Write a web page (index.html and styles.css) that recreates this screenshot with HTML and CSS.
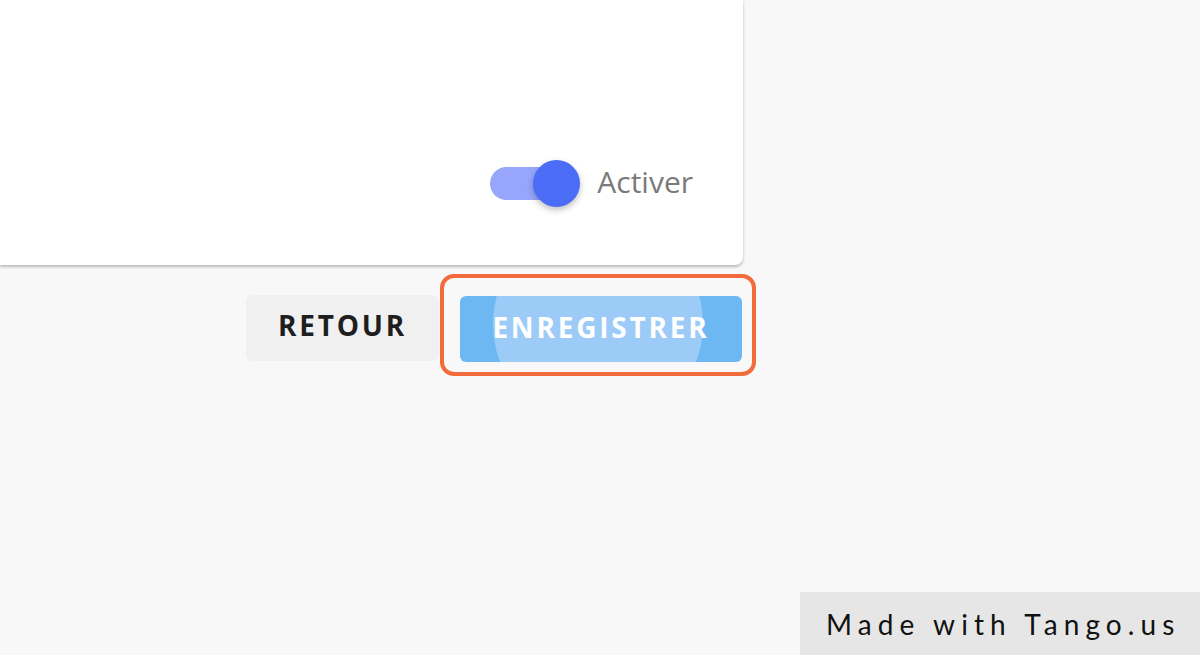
FILE: index.html
```html
<!DOCTYPE html>
<html lang="fr">
  <head>
    <meta charset="UTF-8" />
    <title>Paramètres</title>
    <link rel="stylesheet" href="styles.css">
  </head>
  <body>
    <div class="card">
      <label class="switch">
        <span class="track"><span class="knob"></span></span>
        <span class="switch-label">Activer</span>
      </label>
    </div>

    <div class="actions">
      <button class="btn btn-back">RETOUR</button>
      <div class="highlight">
        <button class="btn btn-save">
          <span class="ripple"></span>
          <span class="btn-text">ENREGISTRER</span>
        </button>
      </div>
    </div>

    <div class="tango">Made with Tango.us</div>
  </body>
</html>
```

FILE: styles.css
```css
body {
  margin: 0;
  background-color: #f8f8f8;
  font-family: "Open Sans", "Liberation Sans", sans-serif;
  height: 655px;
  overflow: hidden;
  position: relative;
}

.card {
  width: 743px;
  height: 265px;
  background: white;
  border-radius: 0 0 8px 0;
  box-shadow: 0 2px 3px rgba(0, 0, 0, 0.25);
  display: flex;
  justify-content: flex-end;
  align-items: flex-end;
  box-sizing: border-box;
  padding: 0 50px 63px 0;
}

.switch {
  display: flex;
  align-items: center;
  gap: 16px;
}

.track {
  position: relative;
  width: 67px;
  height: 33px;
  border-radius: 17px;
  background-color: #97a6fb;
  margin-right: 8px;
}

.knob {
  position: absolute;
  right: -23px;
  top: -7px;
  width: 47px;
  height: 47px;
  border-radius: 50%;
  background-color: #4a6cf7;
  box-shadow: 0 3px 6px rgba(0, 0, 0, 0.25);
}

.switch-label {
  font-size: 30px;
  color: #7a7a7a;
  margin-left: 16px;
  margin-top: -4px;
}

.actions {
  width: 743px;
  display: flex;
  justify-content: flex-end;
  align-items: center;
  gap: 1px;
  margin-top: 9px;
}

.btn {
  border: none;
  height: 66px;
  border-radius: 6px;
  font-family: "Open Sans", "Liberation Sans", sans-serif;
  font-weight: 700;
  font-size: 28px;
  letter-spacing: 2.8px;
  cursor: pointer;
}

.btn-back {
  width: 193px;
  margin-top: 5px;
  padding-bottom: 6px;
  background-color: #f0f0f0;
  color: #1e1e1e;
}

.highlight {
  padding: 18px 10px 10px 16px;
  margin-right: -13px;
  border: 4px solid #f26b3a;
  border-radius: 14px;
  box-sizing: border-box;
}

.btn-save {
  position: relative;
  overflow: hidden;
  width: 282px;
  background-color: #6db8f3;
  color: white;
  display: block;
  line-height: 54px;
  padding-bottom: 6px;
}

.ripple {
  position: absolute;
  left: 33px;
  top: -77px;
  width: 210px;
  height: 210px;
  border-radius: 50%;
  background-color: #9ccbf7;
}

.btn-text {
  position: relative;
}

.tango {
  position: absolute;
  right: 0;
  bottom: 0;
  width: 400px;
  height: 63px;
  box-sizing: border-box;
  background-color: #e6e6e6;
  color: #111;
  font-family: "Lato", sans-serif;
  font-size: 28px;
  letter-spacing: 6.1px;
  display: flex;
  align-items: center;
  padding-left: 26px;
  white-space: nowrap;
}
```
